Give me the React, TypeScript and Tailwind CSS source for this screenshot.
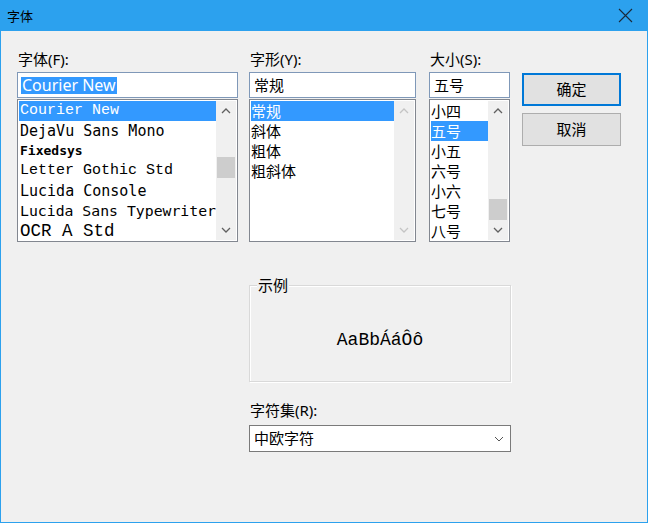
import React from "react"

const ui = "font-['Noto_Sans','Noto_Sans_CJK_SC',sans-serif]"

interface FontItem {
  name: string
  cls: string
}

const fonts: FontItem[] = [
  { name: "Courier New", cls: "font-['Liberation_Mono',monospace] text-[15px]" },
  { name: "DejaVu Sans Mono", cls: "font-['DejaVu_Sans_Mono',monospace] text-[15px]" },
  { name: "Fixedsys", cls: "font-['DejaVu_Sans_Mono',monospace] text-[13px] font-bold" },
  { name: "Letter Gothic Std", cls: "font-['Liberation_Mono',monospace] text-[15px] text-[#444]" },
  { name: "Lucida Console", cls: "font-['DejaVu_Sans_Mono',monospace] text-[15px]" },
  { name: "Lucida Sans Typewriter", cls: "font-['DejaVu_Sans_Mono',monospace] text-[14.8px]" },
  { name: "OCR A Std", cls: "font-['Liberation_Mono',monospace] text-[17.5px]" },
]

const styles = ["常规", "斜体", "粗体", "粗斜体"]
const sizes = ["小四", "五号", "小五", "六号", "小六", "七号", "八号"]

const Chevron = ({ up, disabled }: { up?: boolean; disabled?: boolean }) => (
  <svg width="10" height="6" viewBox="0 0 10 6">
    <polyline
      points={up ? "1,5 5,1 9,5" : "1,1 5,5 9,1"}
      fill="none"
      stroke={disabled ? "#c4c4c4" : "#606060"}
      strokeWidth="1.3"
    />
  </svg>
)

const ScrollBar = ({ thumbTop, disabled }: { thumbTop?: number; disabled?: boolean }) => (
  <div className="w-[20px] h-full bg-[#f0f0f0] flex flex-col">
    <div className="h-[20px] flex items-center justify-center">
      <Chevron up disabled={disabled} />
    </div>
    <div className="flex-1 flex flex-col">
      {thumbTop !== undefined && (
        <div className="h-[21px] bg-[#cdcdcd] mx-[1px]" style={{ marginTop: thumbTop }} />
      )}
    </div>
    <div className="h-[20px] flex items-center justify-center">
      <Chevron disabled={disabled} />
    </div>
  </div>
)

const Edit = ({ children }: { children: React.ReactNode }) => (
  <div className="h-[26px] bg-white border border-[#7f98b8] flex items-center pl-[3px] text-[15px] leading-[17px] overflow-hidden whitespace-nowrap">
    {children}
  </div>
)

const ListBox = ({ children, thumbTop, disabled }: { children: React.ReactNode; thumbTop?: number; disabled?: boolean }) => (
  <div className="mt-[1px] h-[143px] bg-white border border-[#828790] p-[1px] flex">
    <div className="flex-1 min-w-0 overflow-hidden">{children}</div>
    <ScrollBar thumbTop={thumbTop} disabled={disabled} />
  </div>
)

const Row = ({ selected, className, children }: { selected?: boolean; className?: string; children: React.ReactNode }) => (
  <div
    className={
      "h-[20px] flex items-center whitespace-nowrap overflow-hidden " +
      (selected ? "bg-[#3399ff] text-white " : "text-black ") +
      (className ?? "")
    }
  >
    {children}
  </div>
)

const Label = ({ children }: { children: React.ReactNode }) => (
  <div className="h-[20px] text-[15px] leading-[15px] pl-[1px] text-black">{children}</div>
)

export default function App() {
  return (
    <div className={"w-[648px] h-[523px] bg-[#f0f0f0] border-x border-b border-[#2ca1ee] flex flex-col " + ui}>
      <div className="h-[31px] bg-[#2ca1ee] flex items-center justify-between pl-[6px] pr-[14px]">
        <span className="text-[13px] leading-[16px] text-black">字体</span>
        <svg width="15" height="15" viewBox="0 0 15 15">
          <path d="M1 1 L14 14 M14 1 L1 14" stroke="#1b2a3a" strokeWidth="1.1" fill="none" />
        </svg>
      </div>

      <div className="pl-[16px] pt-[21px] flex flex-col">
        <div className="flex">
          <div className="w-[221px] flex flex-col">
            <Label>字体(F):</Label>
            <Edit>
              <span className="bg-[#3399ff] text-white px-[1px] text-[16px]">Courier New</span>
            </Edit>
            <ListBox thumbTop={36}>
              {fonts.map((f, i) => (
                <Row key={f.name} selected={i === 0} className={"pl-[1px] " + f.cls}>
                  {f.name}
                </Row>
              ))}
            </ListBox>
          </div>

          <div className="w-[167px] ml-[11px] flex flex-col">
            <Label>字形(Y):</Label>
            <Edit>
              <span className="pl-[1px]">常规</span>
            </Edit>
            <ListBox disabled>
              {styles.map((s, i) => (
                <Row key={s} selected={i === 0} className="text-[15px]">
                  {s}
                </Row>
              ))}
            </ListBox>
          </div>

          <div className="w-[81px] ml-[13px] flex flex-col">
            <Label>大小(S):</Label>
            <Edit>
              <span className="pl-[1px]">五号</span>
            </Edit>
            <ListBox thumbTop={78}>
              {sizes.map((s, i) => (
                <Row key={s} selected={i === 1} className="text-[15px]">
                  {s}
                </Row>
              ))}
            </ListBox>
          </div>

          <div className="w-[99px] ml-[12px] pt-[21px] flex flex-col gap-[7px]">
            <button className="h-[33px] bg-[#e1e1e1] border-2 border-[#0078d7] text-[15px] text-black">确定</button>
            <button className="h-[33px] bg-[#e1e1e1] border border-[#adadad] text-[15px] text-black">取消</button>
          </div>
        </div>

        <div className="ml-[232px] w-[262px] flex flex-col">
          <div className="mt-[43px] h-[97px] relative border border-[#d9d9d9] shadow-[inset_1px_1px_0_#ffffff,1px_1px_0_#ffffff] flex items-center justify-center pt-[14px]">
            <span className="absolute -top-[10px] left-[7px] bg-[#f0f0f0] px-[1px] text-[15px] leading-[18px]">示例</span>
            <span className="font-['Liberation_Mono',monospace] text-[18px] text-black">AaBbÁáÔô</span>
          </div>

          <div className="mt-[21px]">
            <Label>字符集(R):</Label>
          </div>
          <div className="mt-[2px] h-[27px] bg-white border border-[#7a7a7a] flex items-center justify-between pl-[4px] pr-[6px]">
            <span className="text-[15px] leading-[17px]">中欧字符</span>
            <svg width="10" height="6" viewBox="0 0 10 6">
              <polyline points="1,1 5,5 9,1" fill="none" stroke="#555555" strokeWidth="1" />
            </svg>
          </div>
        </div>
      </div>
    </div>
  )
}
